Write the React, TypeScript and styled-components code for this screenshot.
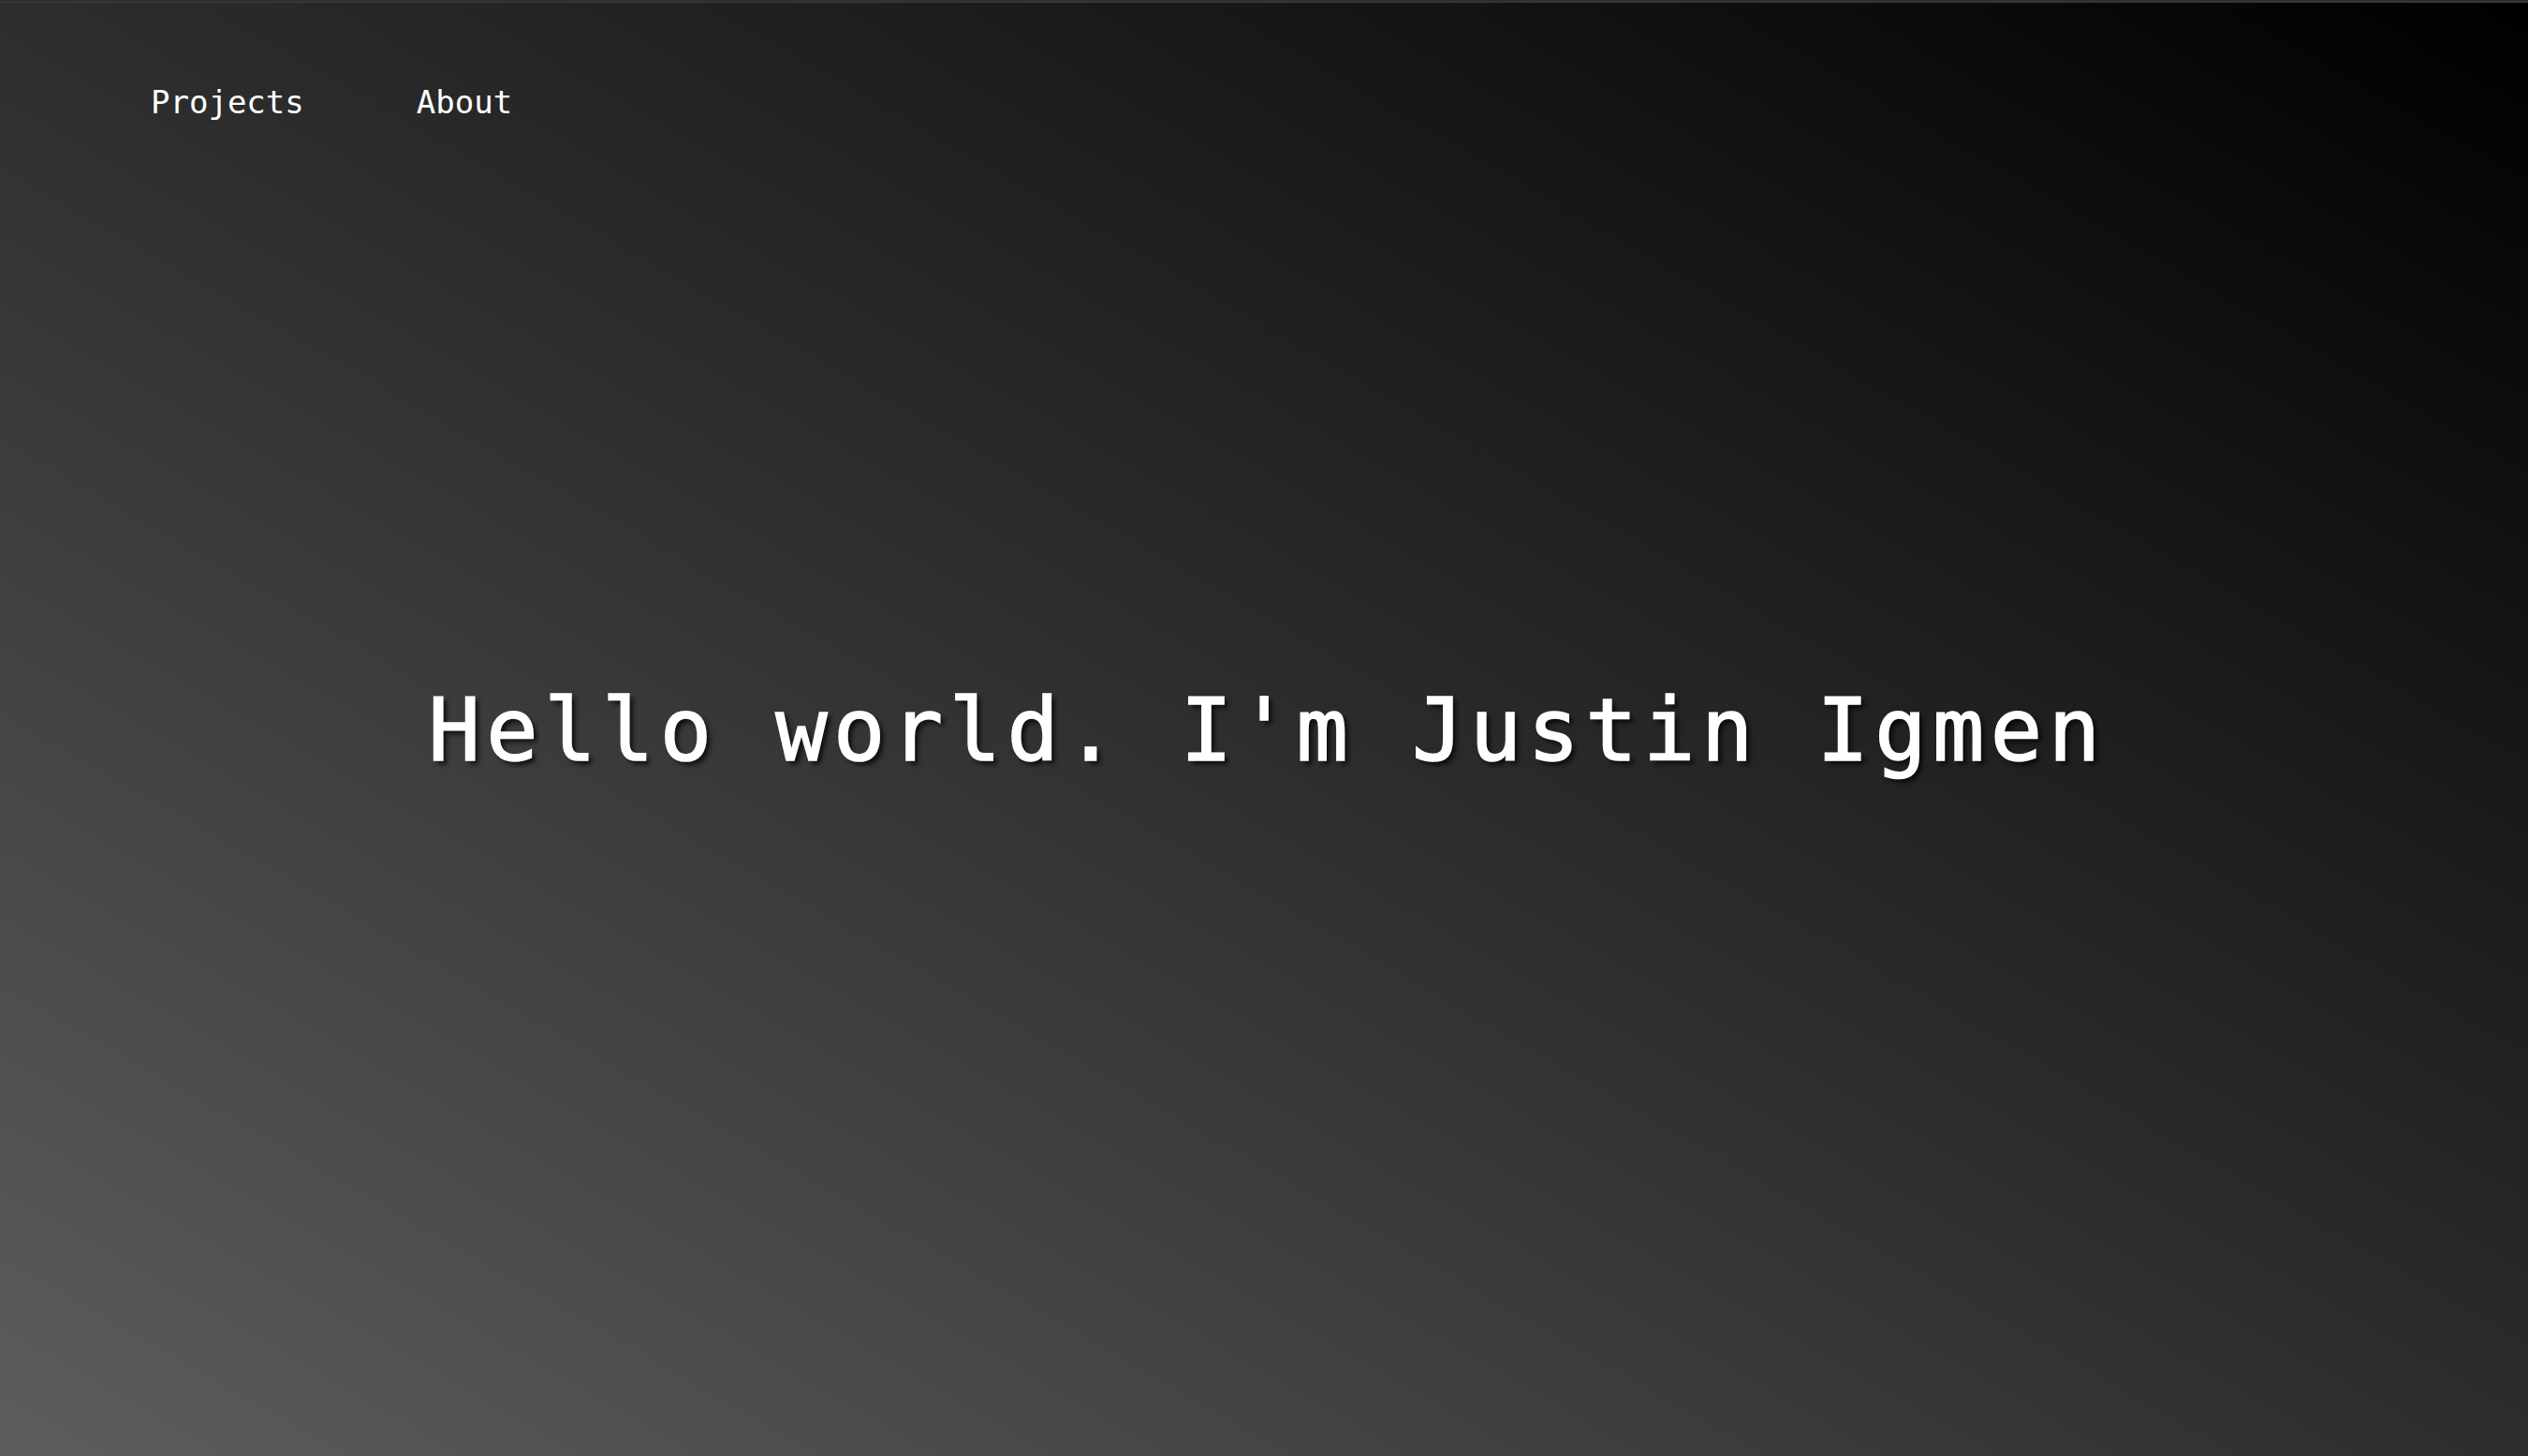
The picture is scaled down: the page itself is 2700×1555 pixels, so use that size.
import React from "react";
import styled, { createGlobalStyle } from "styled-components";

const GlobalStyle = createGlobalStyle`
  html, body {
    margin: 0;
    padding: 0;
    height: 100%;
  }
  body {
    font-family: "DejaVu Sans Mono", "Liberation Mono", monospace;
    background: #000;
  }
  #root {
    min-height: 100vh;
  }
`;

const Page = styled.div`
  min-height: 100vh;
  display: flex;
  flex-direction: column;
  background: linear-gradient(to top right, #5d5d5d 0%, #2d2d2d 50%, #000000 100%);
  color: #ffffff;
`;

const TopStrip = styled.div`
  height: 2px;
  background: #2f2f34;
  border-bottom: 1px solid #3a3a3f;
  flex: none;
`;

const Header = styled.header`
  flex: none;
  height: 187px;
  box-sizing: border-box;
  padding: 89px 0 0 161px;
`;

const Nav = styled.nav`
  display: flex;
  gap: 120px;
`;

const NavLink = styled.a`
  font-family: "DejaVu Sans Mono", monospace;
  font-size: 34px;
  line-height: 1;
  color: #ffffff;
  text-decoration: none;
  cursor: pointer;
`;

const Hero = styled.main`
  flex: 1;
  display: flex;
  align-items: center;
  justify-content: center;
  padding-bottom: 184px;
`;

const Title = styled.h1`
  margin: 0;
  padding-left: 7px;
  font-family: "DejaVu Sans Mono", monospace;
  font-weight: 400;
  font-size: 92px;
  line-height: 1;
  letter-spacing: 6.4px;
  color: #ffffff;
  white-space: nowrap;
  -webkit-text-stroke: 1.6px #ffffff;
  text-shadow: 4px 4px 5px rgba(0, 0, 0, 0.75);
`;

export default function App() {
  return (
    <>
      <GlobalStyle />
      <Page>
        <TopStrip />
        <Header>
          <Nav>
            <NavLink>Projects</NavLink>
            <NavLink>About</NavLink>
          </Nav>
        </Header>
        <Hero>
          <Title>Hello world. I'm Justin Igmen</Title>
        </Hero>
      </Page>
    </>
  );
}
